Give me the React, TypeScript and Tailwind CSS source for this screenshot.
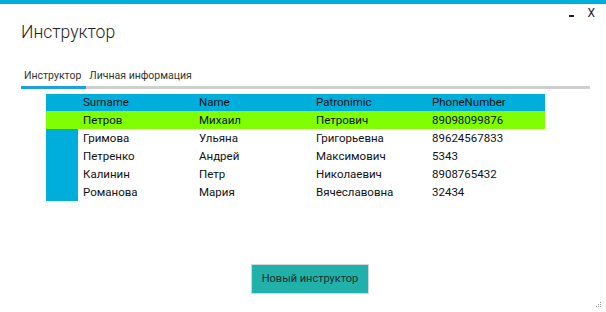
import React from "react";

const rows = [
  ["Петров", "Михаил", "Петрович", "89098099876"],
  ["Гримова", "Ульяна", "Григорьевна", "89624567833"],
  ["Петренко", "Андрей", "Максимович", "5343"],
  ["Калинин", "Петр", "Николаевич", "8908765432"],
  ["Романова", "Мария", "Вячеславовна", "32434"],
];

export default function App() {
  return (
    <div
      className="w-[606px] h-[312px] bg-white flex flex-col relative overflow-hidden text-[#111]"
      style={{ fontFamily: 'Roboto, "Open Sans", sans-serif' }}
    >
      <div className="h-[4px] bg-[#00aedb]" />
      <div className="absolute right-[11px] top-[7px] flex items-center gap-[13px] text-[12px] text-[#222]">
        <span className="block w-[5px] h-[2px] bg-[#222] mt-[6px]" />
        <span className="leading-none">X</span>
      </div>
      <div className="pl-[21px] pt-[13px] text-[17.5px] font-light leading-[30px] text-[#222]">
        Инструктор
      </div>
      <div className="pl-[21px] pr-[16px] mt-[21px]">
        <div className="flex gap-[8px] text-[10.5px] text-[#333] leading-[16px] pl-[3px]">
          <span>Инструктор</span>
          <span>Личная информация</span>
        </div>
        <div className="flex mt-[2px] h-[3px]">
          <div className="w-[65px] bg-[#1ba1e2]" />
          <div className="flex-1 bg-[#cfcfcf]" />
        </div>
      </div>
      <div className="ml-[46px] mt-[5px] w-[499px] text-[11.5px] leading-[18px]">
        <div className="flex bg-[#00aedb] h-[17px] leading-[17px]">
          <div className="w-[32px]" />
          <div className="w-[116px] pl-[5px]">Surname</div>
          <div className="w-[117px] pl-[5px]">Name</div>
          <div className="w-[116px] pl-[5px]">Patronimic</div>
          <div className="flex-1 pl-[5px]">PhoneNumber</div>
        </div>
        {rows.map((r, i) => (
          <div
            key={i}
            className={"flex h-[18px] " + (i === 0 ? "bg-[#7fff00]" : "")}
          >
            <div className={"w-[32px] " + (i === 0 ? "" : "bg-[#00aedb]")} />
            <div className="w-[116px] pl-[5px]">{r[0]}</div>
            <div className="w-[117px] pl-[5px]">{r[1]}</div>
            <div className="w-[116px] pl-[5px]">{r[2]}</div>
            <div className="flex-1 pl-[5px]">{r[3]}</div>
          </div>
        ))}
      </div>
      <div className="flex-1" />
      <div className="flex justify-center pb-[18px] pl-[14px]">
        <div className="w-[118px] h-[30px] bg-[#20b2aa] border border-[#cfd8d6] flex items-center justify-center text-[11px] text-[#1a2a2a]">
          Новый инструктор
        </div>
      </div>
      <svg className="absolute right-[4px] bottom-[4px]" width="7" height="7" viewBox="0 0 7 7">
        <rect x="5" y="1" width="1" height="1" fill="#999" />
        <rect x="3" y="3" width="1" height="1" fill="#999" />
        <rect x="5" y="3" width="1" height="1" fill="#999" />
        <rect x="1" y="5" width="1" height="1" fill="#999" />
        <rect x="3" y="5" width="1" height="1" fill="#999" />
        <rect x="5" y="5" width="1" height="1" fill="#999" />
      </svg>
    </div>
  );
}
